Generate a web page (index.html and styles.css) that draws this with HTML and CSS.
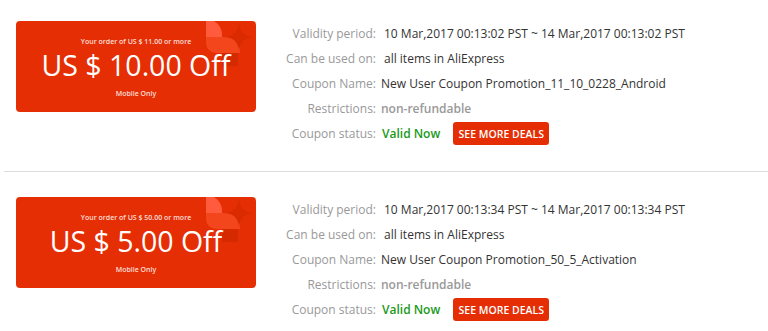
FILE: index.html
```html
<!DOCTYPE html>
<html>
<head>
<meta charset="utf-8">
<link rel="stylesheet" href="styles.css">
</head>
<body>
<div class="list">
  <div class="item">
    <div class="coupon">
      <svg class="deco" width="50" height="46" viewBox="0 0 50 46">
        <path d="M0 0 H8 A16 16 0 0 1 16 16 V18 H0 Z" fill="#ff5b3c"/>
        <path d="M0 16 H16 V32 H10 A10 10 0 0 1 0 22 Z" fill="#f4461d"/>
        <path d="M16 16 H34 V32 H16 Z" fill="#f4461d"/>
        <path d="M33 0 Q33 16 49 16 Q33 16 33 32 Q33 16 17 16 Q33 16 33 0 Z" fill="#d92a00"/>
        <path d="M16 32 H32 V45 H16 Z" fill="#d52a00"/>
      </svg>
      <div class="c-min">Your order of US $ 11.00 or more</div>
      <div class="c-amt">US $ 10.00 Off</div>
      <div class="c-note">Mobile Only</div>
    </div>
    <div class="details">
      <div class="row"><span class="lbl">Validity period:</span><span class="val pad">10 Mar,2017 00:13:02 PST ~ 14 Mar,2017 00:13:02 PST</span></div>
      <div class="row"><span class="lbl">Can be used on:</span><span class="val pad">all items in AliExpress</span></div>
      <div class="row"><span class="lbl">Coupon Name:</span><span class="val">New User Coupon Promotion_11_10_0228_Android</span></div>
      <div class="row"><span class="lbl">Restrictions:</span><span class="val muted">non-refundable</span></div>
      <div class="row"><span class="lbl">Coupon status:</span><span class="val ok">Valid Now</span><a class="btn">SEE MORE DEALS</a></div>
    </div>
  </div>
  <div class="item">
    <div class="coupon">
      <svg class="deco" width="50" height="46" viewBox="0 0 50 46">
        <path d="M0 0 H8 A16 16 0 0 1 16 16 V18 H0 Z" fill="#ff5b3c"/>
        <path d="M0 16 H16 V32 H10 A10 10 0 0 1 0 22 Z" fill="#f4461d"/>
        <path d="M16 16 H34 V32 H16 Z" fill="#f4461d"/>
        <path d="M33 0 Q33 16 49 16 Q33 16 33 32 Q33 16 17 16 Q33 16 33 0 Z" fill="#d92a00"/>
        <path d="M16 32 H32 V45 H16 Z" fill="#d52a00"/>
      </svg>
      <div class="c-min">Your order of US $ 50.00 or more</div>
      <div class="c-amt">US $ 5.00 Off</div>
      <div class="c-note">Mobile Only</div>
    </div>
    <div class="details">
      <div class="row"><span class="lbl">Validity period:</span><span class="val pad">10 Mar,2017 00:13:34 PST ~ 14 Mar,2017 00:13:34 PST</span></div>
      <div class="row"><span class="lbl">Can be used on:</span><span class="val pad">all items in AliExpress</span></div>
      <div class="row"><span class="lbl">Coupon Name:</span><span class="val">New User Coupon Promotion_50_5_Activation</span></div>
      <div class="row"><span class="lbl">Restrictions:</span><span class="val muted">non-refundable</span></div>
      <div class="row"><span class="lbl">Coupon status:</span><span class="val ok">Valid Now</span><a class="btn">SEE MORE DEALS</a></div>
    </div>
  </div>
</div>
</body>
</html>
```
FILE: styles.css
```css
html, body {
  margin: 0;
  padding: 0;
  background: #fff;
  font-family: "Open Sans", "Liberation Sans", sans-serif;
}
.list {
  width: 768px;
}
.item {
  display: flex;
  align-items: flex-start;
  margin-left: 4px;
  padding: 25px 0 25px;
  border-bottom: 1px solid #dcdcdc;
}
.item:first-child {
  padding-top: 21px;
}
.item:last-child {
  border-bottom: none;
}
.coupon {
  position: relative;
  overflow: hidden;
  margin-left: 12px;
  width: 240px;
  height: 91px;
  border-radius: 4px;
  background: #e62e04;
  color: #fff;
  text-align: center;
  display: flex;
  flex-direction: column;
  align-items: center;
}
.deco {
  position: absolute;
  right: 0;
  top: 0;
}
.c-min {
  position: relative;
  margin-top: 16px;
  font-size: 7px;
  line-height: 10px;
  font-weight: 600;
  color: rgba(255,255,255,0.85);
}
.c-amt {
  position: relative;
  margin-top: -1px;
  font-size: 28.5px;
  line-height: 38px;
}
.c-note {
  position: relative;
  margin-top: 5px;
  font-size: 7px;
  line-height: 10px;
  font-weight: 600;
  color: rgba(255,255,255,0.85);
}
.details {
  margin-left: 20px;
  display: flex;
  flex-direction: column;
}
.row {
  display: flex;
  align-items: center;
  height: 25px;
  font-size: 12px;
}
.lbl {
  width: 100px;
  text-align: right;
  color: #999;
  padding-right: 5px;
}
.val {
  color: #333;
}
.val.pad {
  padding-left: 3px;
}
.muted {
  color: #999;
  font-weight: 600;
}
.ok {
  color: #1a9a1a;
  font-weight: 600;
  padding-left: 1px;
}
.btn {
  margin-left: 13px;
  display: inline-flex;
  align-items: center;
  justify-content: center;
  width: 96px;
  height: 23px;
  border-radius: 3px;
  background: #e62e04;
  color: #fff;
  font-size: 10.5px;
  font-weight: 600;
}
```
